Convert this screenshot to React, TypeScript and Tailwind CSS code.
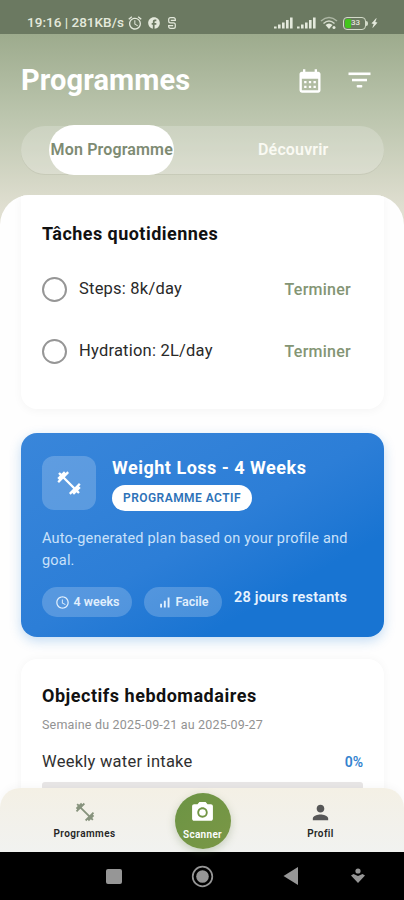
import React, { useState } from 'react';
import {
  MdAccessTime,
  MdAlarm,
  MdBolt,
  MdCalendarMonth,
  MdFacebook,
  MdFitnessCenter,
  MdPerson,
  MdPhotoCamera,
  MdSignalCellularAlt,
} from 'react-icons/md';

interface Task {
  id: number;
  label: string;
}

const tasks: Task[] = [
  { id: 1, label: 'Steps: 8k/day' },
  { id: 2, label: 'Hydration: 2L/day' },
];

function SignalBars() {
  return (
    <svg width="19" height="12" viewBox="0 0 19 12" fill="currentColor">
      <rect x="0" y="9.5" width="2.6" height="2" />
      <rect x="4" y="7.5" width="2.6" height="4" />
      <rect x="8" y="5.5" width="2.6" height="6" />
      <rect x="12" y="3" width="2.6" height="8.5" />
      <rect x="16" y="0.5" width="2.6" height="11" />
    </svg>
  );
}

function StatusBar() {
  return (
    <div className="flex h-[34px] shrink-0 items-center bg-[#6b7961] pl-[27px] pr-[25px] pt-[12px] text-[#e4e9dc]">
      <span className="w-[100px] whitespace-nowrap text-[13.5px] font-medium leading-none tracking-[0.02px]">19:16 | 281KB/s</span>
      <MdAlarm className="h-[16px] w-[16px]" />
      <MdFacebook className="ml-[4px] h-[14px] w-[14px]" />
      <svg className="ml-[6px]" width="10" height="12" viewBox="0 0 10 12" fill="none" stroke="currentColor" strokeWidth="1.2">
        <path d="M8.3 3.4V2.6Q8.3.7 6.4.7H3.6Q1.7.7 1.7 2.6V4Q1.7 5.9 3.6 5.9H6.4Q8.3 5.9 8.3 7.8V9.4Q8.3 11.3 6.4 11.3H3.6Q1.7 11.3 1.7 9.4V8.6" />
        <path d="M3.8 3.4H8.9M1.1 8.6H6.2" />
      </svg>
      <div className="ml-auto flex items-center">
        <SignalBars />
        <span className="w-[4px]" />
        <SignalBars />
        <svg className="ml-[4px]" width="18" height="14" viewBox="0 0 18 14" fill="none" stroke="currentColor" strokeWidth="1.5">
          <path d="M1 5Q9-2 17 5" opacity=".55" />
          <path d="M3.5 7.5Q9 2.5 14.5 7.5" opacity=".85" />
          <path d="M5.5 9Q9 6 12.5 9L9 13Z" fill="currentColor" stroke="none" />
          <circle cx="14" cy="11.5" r="1.5" fill="currentColor" stroke="none" />
        </svg>
        <div className="ml-[5px] flex h-[13px] w-[23px] items-center rounded-[4px] border-[1.5px] border-[#d3dbc9] p-px">
          <span className="h-full w-[6px] rounded-l-[2px] bg-[#43c51c]" />
          <span className="text-[8px] font-medium leading-none">33</span>
        </div>
        <span className="h-[5px] w-[2px] rounded-r bg-[#d3dbc9]" />
        <MdBolt className="ml-[2px] h-[12px] w-[9px] scale-150 rotate-12" />
      </div>
    </div>
  );
}

function FilterIcon() {
  return (
    <svg width="23" height="17" viewBox="0 0 23 17" fill="currentColor">
      <rect x="0.500" y="0.500" width="22" height="2.600" />
      <rect x="4" y="6.800" width="15" height="2.500" />
      <rect x="8.700" y="13" width="5.600" height="2.600" rx="0.800" />
    </svg>
  );
}

function DailyTasks() {
  return (
    <section className="h-[214px] shrink-0 rounded-b-[16px] bg-white px-[21px] pt-[26px] shadow-[0_2px_10px_rgba(0,0,0,0.04)]">
      <h2 className="text-[18px] font-bold leading-[26px] tracking-[0.46px] text-[#111111]">Tâches quotidiennes</h2>
      <div className="mt-[11px]">
        {tasks.map((task) => (
          <div key={task.id} className="flex h-[62px] items-center">
            <span className="h-[25px] w-[25px] rounded-full border-2 border-[#969696]" />
            <span className="ml-[12px] pt-px text-[16.5px] tracking-[0.22px] text-[#292929]">{task.label}</span>
            <button className="ml-auto mr-[12px] pt-[2px] text-[16px] font-medium tracking-[0.25px] text-[#849574]">Terminer</button>
          </div>
        ))}
      </div>
    </section>
  );
}

function ActiveProgram() {
  return (
    <section className="mt-[24px] h-[204px] shrink-0 rounded-[16px] bg-linear-to-br from-[#3986da] via-[#2c7ed7] to-[#1874d2] to-75% px-[21px] pt-[23px] text-white shadow-[0_4px_12px_rgba(25,118,210,0.25)]">
      <div className="flex">
        <div className="flex h-[54px] w-[54px] items-center justify-center rounded-[12px] bg-white/20">
          <MdFitnessCenter className="h-[28px] w-[28px]" />
        </div>
        <div className="ml-[16px] flex flex-col items-start">
          <h2 className="whitespace-nowrap text-[18px] font-bold leading-[24px] tracking-[0.5px]">Weight Loss - 4 Weeks</h2>
          <span className="mt-[5px] flex h-[26px] w-[140px] items-center justify-center whitespace-nowrap rounded-full bg-white text-[12px] font-semibold tracking-[0.45px] text-[#2d72b8]">PROGRAMME ACTIF</span>
        </div>
      </div>
      <p className="mt-[17px] text-[14.5px] leading-[22px] tracking-[0.2px] text-[#c9e1fa]">
        <span className="whitespace-nowrap">Auto-generated plan based on your profile and</span> goal.
      </p>
      <div className="mt-[15px] flex items-start whitespace-nowrap">
        <span className="flex h-[30px] w-[90px] items-center justify-center gap-[4px] rounded-full bg-white/20 text-[12.5px] font-semibold text-[#e1effd]">
          <MdAccessTime className="h-[15px] w-[15px]" />
          4 weeks
        </span>
        <span className="ml-[12px] flex h-[30px] w-[78px] items-center justify-center gap-[3px] rounded-full bg-white/20 text-[12.5px] font-semibold text-[#e1effd]">
          <MdSignalCellularAlt className="h-[15px] w-[15px]" />
          Facile
        </span>
        <span className="ml-[12px] text-[14.5px] font-semibold leading-[22px] tracking-[0.2px] text-[#e7f2fe]">28 jours restants</span>
      </div>
    </section>
  );
}

function WeeklyGoals() {
  return (
    <section className="mt-[22px] h-[200px] shrink-0 rounded-[16px] bg-white px-[21px] pt-[24px] shadow-[0_0_10px_rgba(0,0,0,0.04)]">
      <h2 className="text-[18px] font-bold leading-[26px] tracking-[0.52px] text-[#111111]">Objectifs hebdomadaires</h2>
      <p className="mt-[7px] text-[12.5px] leading-[18px] tracking-[0.18px] text-[#929292]">Semaine du 2025-09-21 au 2025-09-27</p>
      <div className="mt-[15px] flex items-center justify-between leading-[26px]">
        <span className="text-[16.5px] tracking-[0.25px] text-[#303030]">Weekly water intake</span>
        <span className="text-[14px] font-semibold text-[#3483cf]">0%</span>
      </div>
      <div className="mt-[7px] h-[8px] rounded-[3px] bg-[#e8e6e6]" />
    </section>
  );
}

function BottomNav() {
  return (
    <nav className="absolute inset-x-0 bottom-0 flex h-[64px] items-start justify-center rounded-t-[20px] bg-linear-to-b from-[#f4f0e5] to-[#f1f2f0] pl-px text-[10px] font-semibold text-[#252525] shadow-[0_-2px_8px_rgba(0,0,0,0.03)]">
      <button className="mt-[13px] flex w-[118px] flex-col items-center">
        <MdFitnessCenter className="h-[22px] w-[22px] text-[#87937d]" />
        <span className="mt-[4px] leading-[13px] tracking-[0.4px]">Programmes</span>
      </button>
      <button className="mx-[31px] mt-[5px] flex h-[56px] w-[56px] flex-col items-center rounded-full bg-linear-to-br from-[#6c9444] to-[#7a9746] pt-[7px] text-white shadow-[0_3px_9px_rgba(85,115,60,0.28)]">
        <MdPhotoCamera className="h-[25px] w-[25px]" />
        <span className="mt-[3px] leading-[13px] tracking-[0.3px]">Scanner</span>
      </button>
      <button className="mt-[13px] flex w-[118px] flex-col items-center">
        <MdPerson className="h-[23px] w-[23px] text-[#575757]" />
        <span className="mt-[3px] leading-[13px] tracking-[0.35px]">Profil</span>
      </button>
    </nav>
  );
}

function SystemNav() {
  return (
    <div className="flex h-[48px] shrink-0 items-center bg-black pl-[106px] text-[#969696]">
      <span className="h-[15px] w-[16px] rounded-[2px] bg-current" />
      <svg className="ml-[69px]" width="23" height="23" viewBox="0 0 23 23">
        <circle cx="11.5" cy="11.5" r="9.8" fill="none" stroke="currentColor" strokeWidth="1.7" />
        <circle cx="11.5" cy="11.5" r="6.3" fill="currentColor" />
      </svg>
      <svg className="ml-[69px]" width="16" height="20" viewBox="0 0 16 20" fill="currentColor">
        <path d="M15 1V19L.5 10Z" />
      </svg>
      <svg className="ml-[52px]" width="14" height="16" viewBox="0 0 14 16" fill="currentColor">
        <circle cx="7" cy="3" r="2.6" />
        <path d="M0 7.5L2.500 6L7 8L11.500 6L14 7.500L7 15Z" />
      </svg>
    </div>
  );
}

export default function App() {
  const [tab, setTab] = useState('mine');

  return (
    <div className="flex h-[900px] w-[404px] flex-col overflow-hidden bg-black font-['Roboto',sans-serif]">
      <StatusBar />
      <div className="relative flex min-h-0 flex-1 flex-col bg-[linear-gradient(to_bottom,#9dab8d_0px,#bac4ac_78px,#e0dfd1_175px)]">
        {/* Header */}
        <header className="flex h-[92px] shrink-0 items-center pl-[21px] pr-[33px] pt-px text-white">
          <h1 className="text-[29px] font-bold tracking-[0.1px]">Programmes</h1>
          <button className="ml-auto" aria-label="Calendrier">
            <MdCalendarMonth className="h-[28px] w-[28px]" />
          </button>
          <button className="ml-[24px]" aria-label="Filtrer">
            <FilterIcon />
          </button>
        </header>

        {/* Tabs */}
        <div className="ml-[21px] mr-[20px] flex h-[48px] shrink-0 rounded-full bg-white/20 text-[16px] font-semibold shadow-[0_1px_0_rgba(120,125,105,0.12)]">
          <div className="flex w-1/2 justify-center">
            <button
              onClick={() => setTab('mine')}
              className={`-mt-px h-[50px] w-[125px] whitespace-nowrap rounded-full tracking-[0.15px] ${tab === 'mine' ? 'bg-white text-[#7e8b73]' : 'text-white'}`}
            >
              Mon Programme
            </button>
          </div>
          <div className="flex w-1/2 justify-center">
            <button
              onClick={() => setTab('discover')}
              className={`h-[48px] w-[125px] rounded-full tracking-[0.15px] ${tab === 'discover' ? 'bg-white text-[#7e8b73]' : 'text-[#fafaf3]'}`}
            >
              Découvrir
            </button>
          </div>
        </div>

        {/* Scrolling sheet */}
        <main className="mt-[21px] flex min-h-0 flex-1 flex-col overflow-hidden rounded-t-[30px] bg-[#fefefe] pl-[21px] pr-[20px]">
          <DailyTasks />
          <ActiveProgram />
          <WeeklyGoals />
        </main>
        <BottomNav />
      </div>
      <SystemNav />
    </div>
  );
}
